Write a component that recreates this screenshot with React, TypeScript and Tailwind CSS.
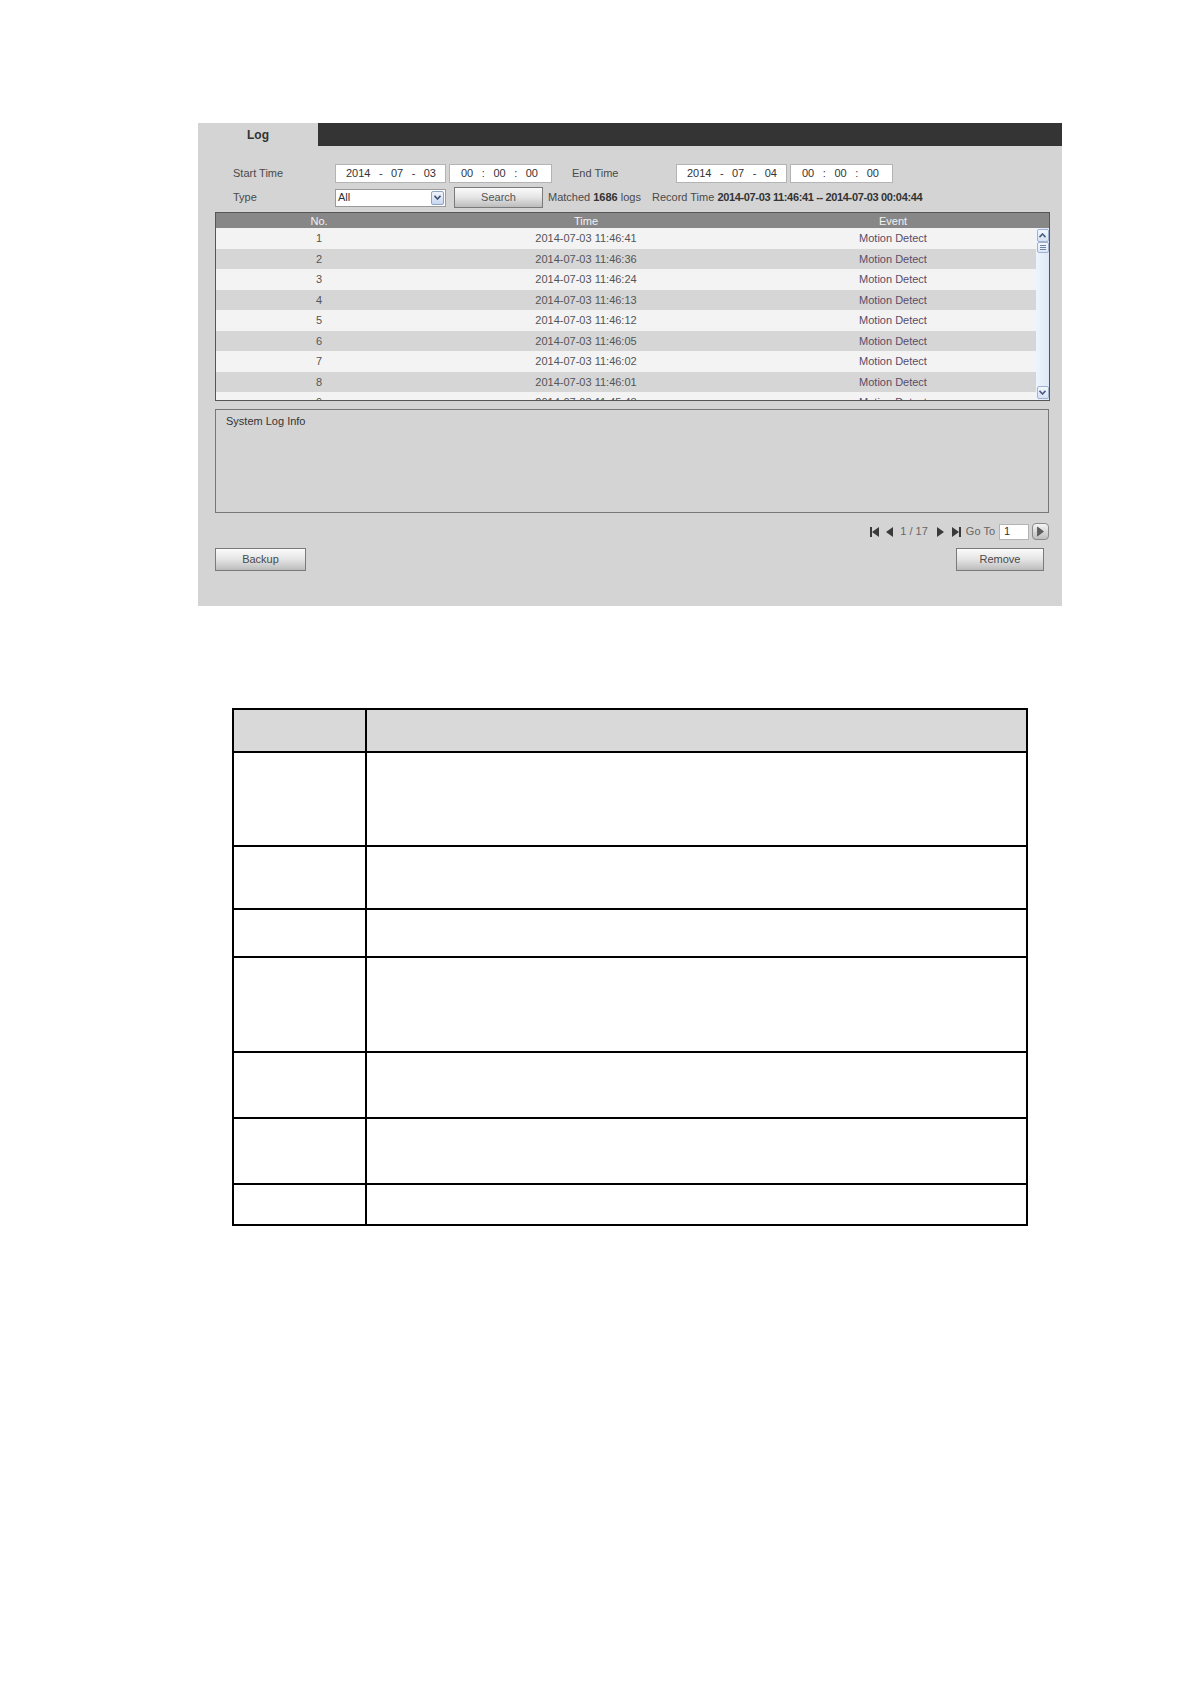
import React from 'react';

const logs = [
  '2014-07-03 11:46:41',
  '2014-07-03 11:46:36',
  '2014-07-03 11:46:24',
  '2014-07-03 11:46:13',
  '2014-07-03 11:46:12',
  '2014-07-03 11:46:05',
  '2014-07-03 11:46:02',
  '2014-07-03 11:46:01',
  '2014-07-03 11:45:48',
];

// row heights of the empty parameter table under the screenshot
const paramRows = ['h-[43px]', 'h-[94px]', 'h-[63px]', 'h-[48px]', 'h-[95px]', 'h-[66px]', 'h-[66px]', 'h-[41px]'];

const DateBox = ({ parts, sep, className }: { parts: string[]; sep: string; className: string }) => (
  <div className={`h-[19px] bg-white border border-[#b4b4b4] flex items-center justify-between text-[11px] text-[#333] ${className}`}>
    <span>{parts[0]}</span>
    <span>{sep}</span>
    <span>{parts[1]}</span>
    <span>{sep}</span>
    <span>{parts[2]}</span>
  </div>
);

const GrayButton = ({ label, className }: { label: string; className: string }) => (
  <div
    className={`flex items-center justify-center border border-[#7a7a7a] bg-gradient-to-b from-[#fbfbfb] via-[#e4e4e4] to-[#bcbcbc] text-[11px] text-[#4a4a4a] ${className}`}
  >
    {label}
  </div>
);

const ScrollArrow = ({ up }: { up: boolean }) => (
  <div className="h-[13px] w-[12px] rounded-[2px] border border-[#9fb3d1] bg-gradient-to-b from-[#f3f7fd] to-[#d5e1f3] flex items-center justify-center">
    <svg width="7" height="5" viewBox="0 0 7 5">
      <path d={up ? 'M0.5 4.2 L3.5 1 L6.5 4.2' : 'M0.5 0.8 L3.5 4 L6.5 0.8'} fill="none" stroke="#4a5d80" strokeWidth="1.6" />
    </svg>
  </div>
);

export default function App() {
  return (
    <div className="min-h-[1684px] bg-white pt-[123px] font-['Liberation_Sans',Arial,sans-serif]">
      {/* Log panel */}
      <div className="ml-[198px] w-[864px] h-[483px] bg-[#d4d4d4] flex flex-col">
        <div className="flex h-[23px]">
          <div className="w-[120px] flex items-center justify-center text-[12px] font-bold text-[#333]">Log</div>
          <div className="flex-1 bg-[#343434]" />
        </div>

        {/* start / end time */}
        <div className="mt-[18px] flex items-center h-[19px] pl-[35px] text-[11px] text-[#4a4a4a]">
          <div className="w-[102px]">Start Time</div>
          <DateBox parts={['2014', '07', '03']} sep="-" className="w-[111px] pl-[10px] pr-[9px]" />
          <DateBox parts={['00', '00', '00']} sep=":" className="ml-[3px] w-[103px] pl-[11px] pr-[13px]" />
          <div className="ml-[20px] w-[104px]">End Time</div>
          <DateBox parts={['2014', '07', '04']} sep="-" className="w-[111px] pl-[10px] pr-[9px]" />
          <DateBox parts={['00', '00', '00']} sep=":" className="ml-[3px] w-[103px] pl-[11px] pr-[13px]" />
        </div>

        {/* type / search */}
        <div className="mt-[4px] flex items-center h-[21px] pl-[35px] text-[11px] text-[#4a4a4a]">
          <div className="w-[102px]">Type</div>
          <div className="w-[111px] h-[18px] bg-white border border-[#9a9a9a] flex items-center justify-between">
            <span className="pl-[2px] text-[#333]">All</span>
            <div className="h-[14px] w-[13px] mr-[1px] rounded-[2px] border border-[#8ea4c7] bg-gradient-to-b from-[#eef3fb] to-[#c9d8ef] flex items-center justify-center">
              <svg width="7" height="5" viewBox="0 0 7 5">
                <path d="M0.5 0.8 L3.5 4 L6.5 0.8" fill="none" stroke="#3f5176" strokeWidth="1.6" />
              </svg>
            </div>
          </div>
          <GrayButton label="Search" className="ml-[8px] w-[89px] h-[21px] text-[#555]" />
          <div className="ml-[5px] whitespace-nowrap">
            Matched <span className="font-bold text-[#333]">1686</span> logs
          </div>
          <div className="ml-[11px] whitespace-nowrap">
            Record Time <span className="font-bold text-[#333] tracking-[-0.35px]">2014-07-03 11:46:41 -- 2014-07-03 00:04:44</span>
          </div>
        </div>

        {/* log list */}
        <div className="mt-[4px] ml-[17px] w-[835px] h-[189px] border border-[#555] flex flex-col text-[11px]">
          <div className="h-[15px] bg-[#878787] grid grid-cols-[206px_328px_1fr] text-[#f2f2f2] items-center shrink-0">
            <div className="text-center">No.</div>
            <div className="text-center">Time</div>
            <div className="text-center pr-[13px]">Event</div>
          </div>
          <div className="flex flex-1 min-h-0">
            <div className="flex-1 overflow-hidden">
              {logs.map((t, i) => (
                <div
                  key={t}
                  className={`h-[20.5px] grid grid-cols-[206px_328px_1fr] items-center ${i % 2 === 0 ? 'bg-[#f3f3f3]' : 'bg-[#d6d6d6]'}`}
                >
                  <div className="text-center text-[#555]">{i + 1}</div>
                  <div className="text-center text-[#555]">{t}</div>
                  <div className="text-center text-[#5a4c68]">Motion Detect</div>
                </div>
              ))}
            </div>
            <div className="w-[13px] bg-gradient-to-r from-[#eef4fd] to-[#dde8f8] flex flex-col items-center justify-between py-[1px]">
              <div className="flex flex-col">
                <ScrollArrow up />
                <div className="h-[11px] w-[12px] rounded-[2px] border border-[#9fb3d1] bg-gradient-to-b from-[#f6f9fe] to-[#dce6f5] flex flex-col items-center justify-center gap-[1px]">
                  <div className="w-[6px] h-px bg-[#6f83a6]" />
                  <div className="w-[6px] h-px bg-[#6f83a6]" />
                  <div className="w-[6px] h-px bg-[#6f83a6]" />
                </div>
              </div>
              <ScrollArrow up={false} />
            </div>
          </div>
        </div>

        {/* system log info */}
        <div className="mt-[8px] ml-[17px] w-[834px] h-[104px] border border-[#777] px-[10px] py-[3px] text-[11px] text-[#333]">
          System Log Info
        </div>

        {/* pager */}
        <div className="mt-[10px] ml-[17px] w-[834px] h-[17px] flex items-center justify-end text-[11px] text-[#666]">
          <svg width="9" height="10" viewBox="0 0 9 10" className="mr-[7px]">
            <rect x="0" y="0" width="2" height="10" fill="#3a3a3a" />
            <polygon points="9,0 2,5 9,10" fill="#3a3a3a" />
          </svg>
          <svg width="7" height="10" viewBox="0 0 7 10" className="mr-[7px]">
            <polygon points="7,0 0,5 7,10" fill="#3a3a3a" />
          </svg>
          <span className="mr-[9px]">1 / 17</span>
          <svg width="7" height="10" viewBox="0 0 7 10" className="mr-[8px]">
            <polygon points="0,0 7,5 0,10" fill="#3a3a3a" />
          </svg>
          <svg width="9" height="10" viewBox="0 0 9 10" className="mr-[5px]">
            <polygon points="0,0 7,5 0,10" fill="#3a3a3a" />
            <rect x="7" y="0" width="2" height="10" fill="#3a3a3a" />
          </svg>
          <span className="mr-[4px]">Go To</span>
          <div className="w-[30px] h-[16px] bg-white border border-[#b4b4b4] flex items-center pl-[4px] text-[#333]">1</div>
          <div className="ml-[3px] w-[17px] h-[17px] rounded-[4px] border border-[#8a8a8a] bg-gradient-to-b from-[#f5f5f5] to-[#bdbdbd] flex items-center justify-center">
            <svg width="9" height="11" viewBox="0 0 9 11">
              <path d="M1.5 1 L7.5 5.5 L1.5 10 Z" fill="#5e5e5e" stroke="#3f3f3f" strokeWidth="0.6" />
            </svg>
          </div>
        </div>

        {/* buttons */}
        <div className="mt-[8px] ml-[17px] w-[829px] flex justify-between">
          <GrayButton label="Backup" className="w-[91px] h-[23px]" />
          <GrayButton label="Remove" className="w-[88px] h-[23px]" />
        </div>
      </div>

      {/* parameter table */}
      <table className="ml-[232px] mt-[102px] w-[796px] border-collapse">
        <tbody>
          {paramRows.map((h, i) => (
            <tr key={i} className={`${h} ${i === 0 ? 'bg-[#d9d9d9]' : 'bg-white'}`}>
              <td className="w-[133px] border-2 border-black p-0" />
              <td className="border-2 border-black p-0" />
            </tr>
          ))}
        </tbody>
      </table>
    </div>
  );
}
